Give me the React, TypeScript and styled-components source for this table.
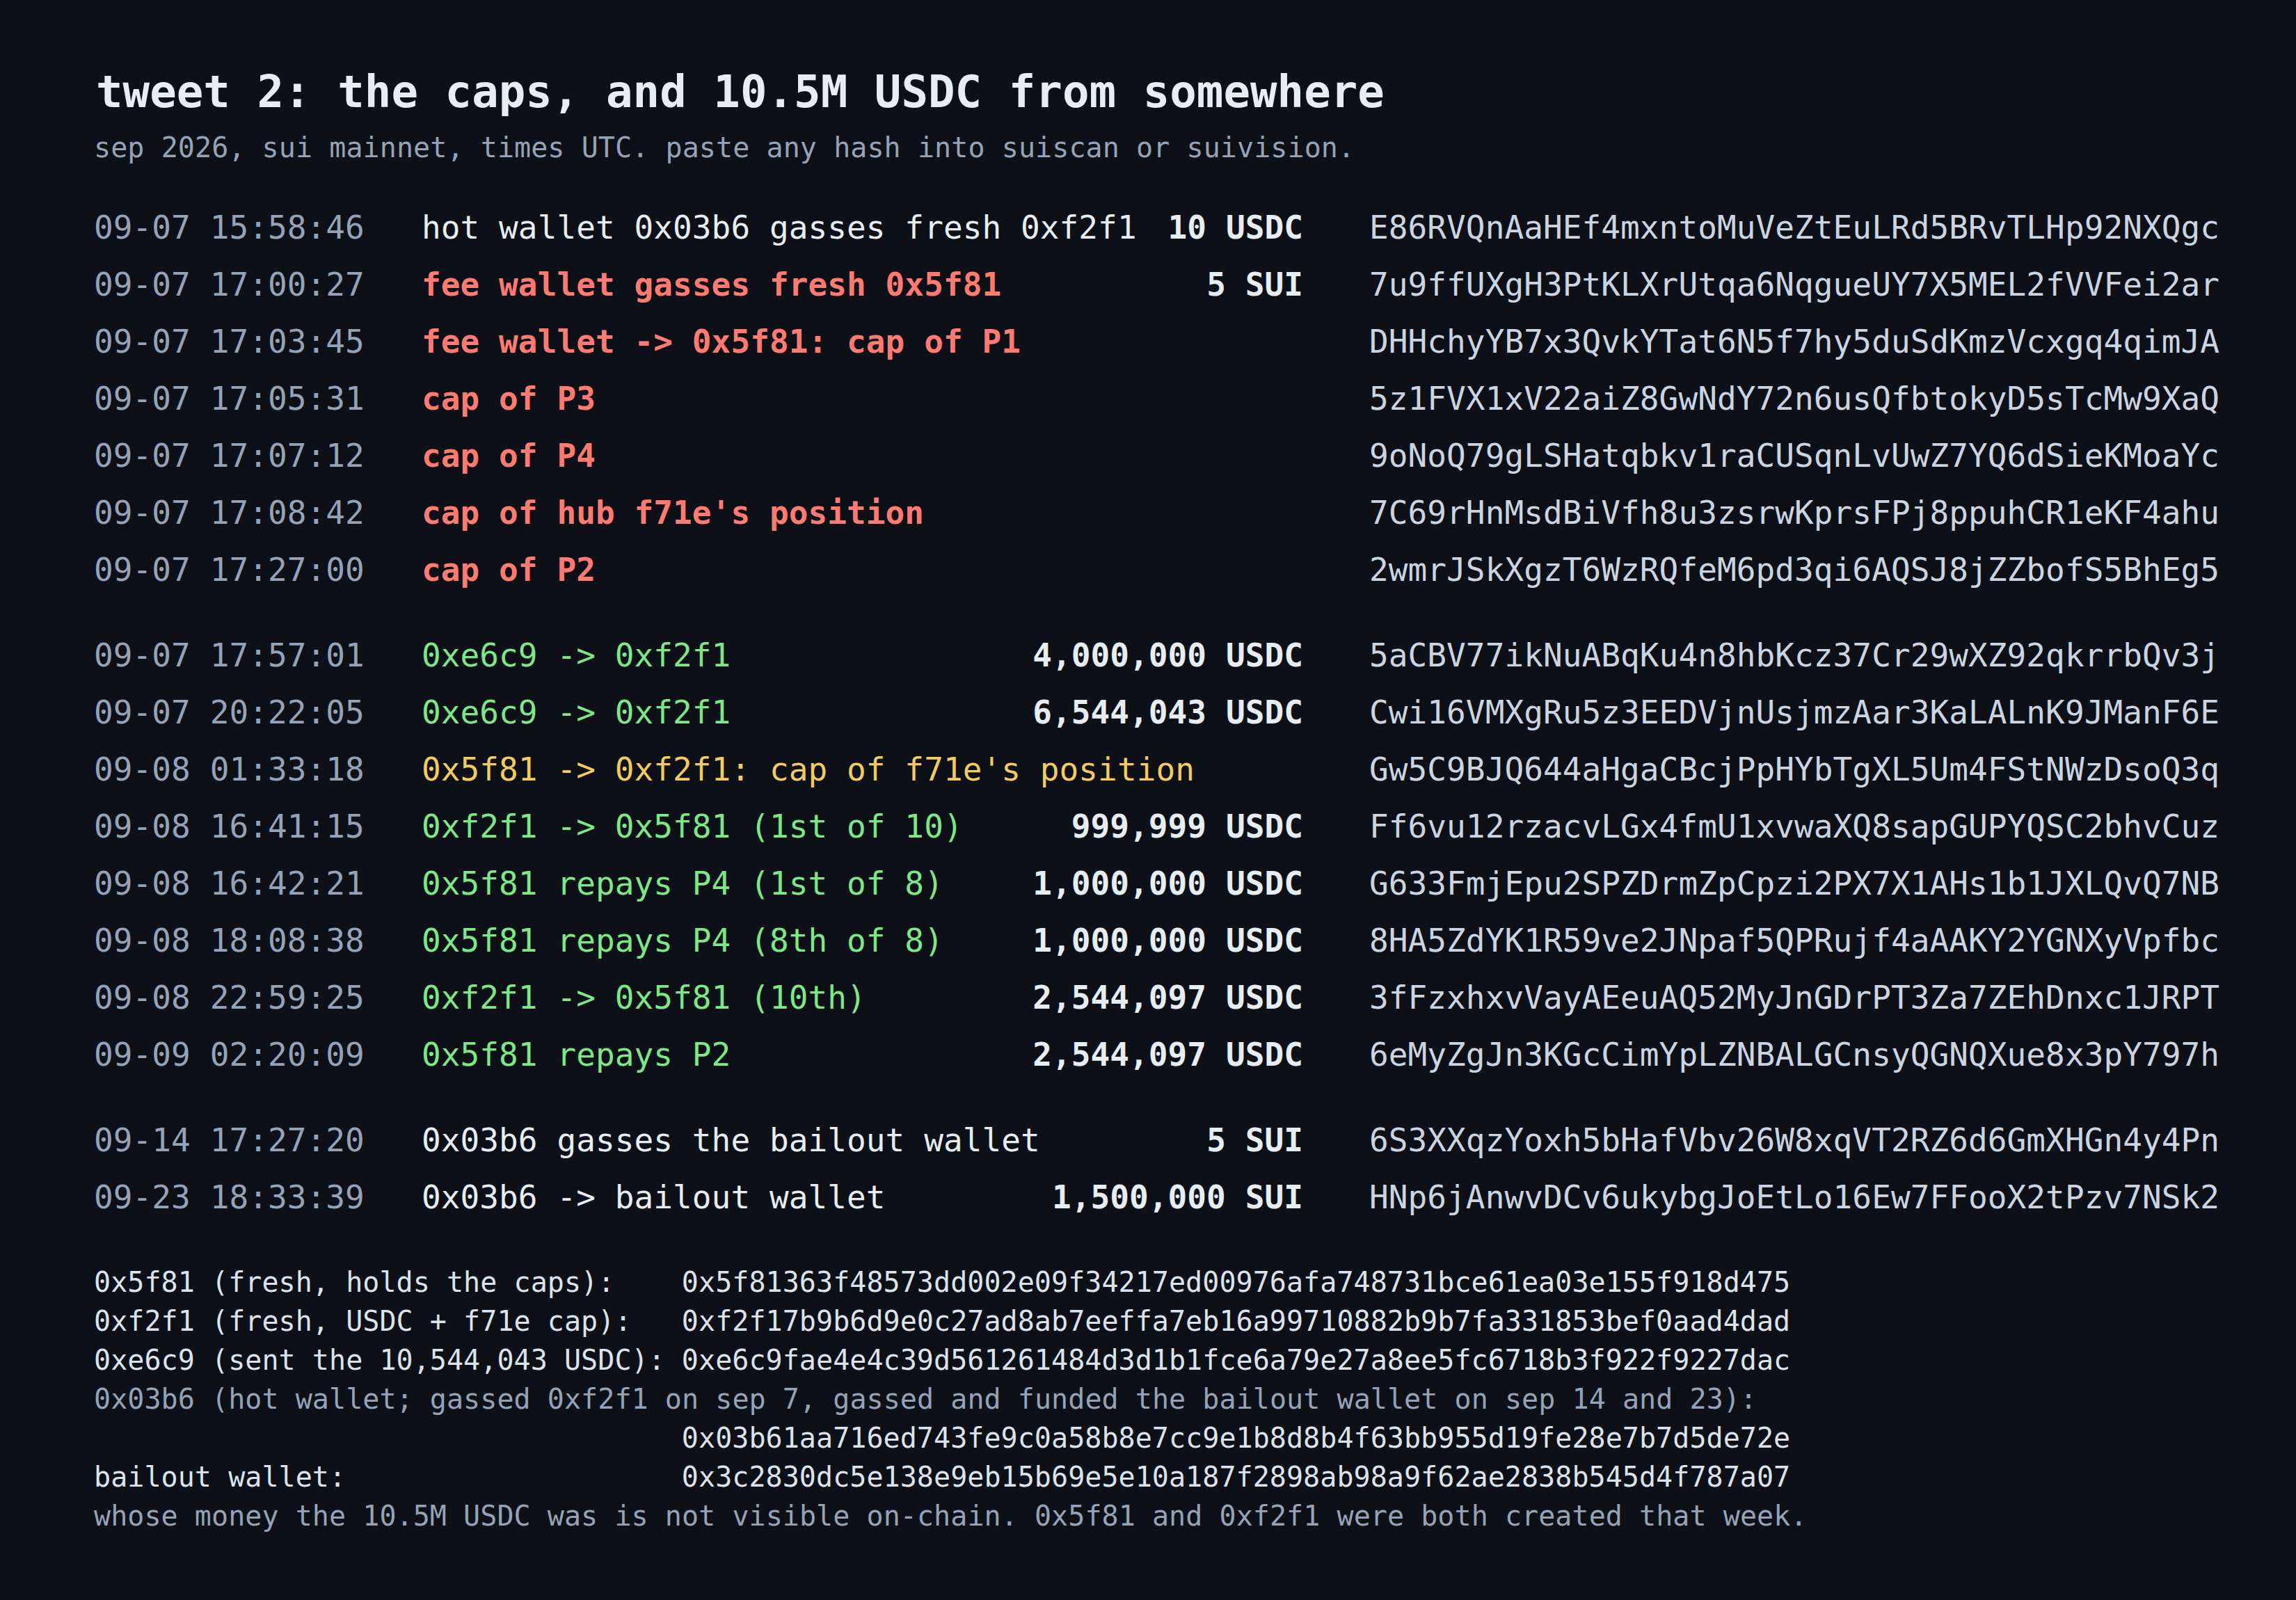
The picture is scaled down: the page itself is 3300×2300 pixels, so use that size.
import React from "react";
import styled, { createGlobalStyle } from "styled-components";

const GlobalStyle = createGlobalStyle`
  html, body {
    margin: 0;
    padding: 0;
    background: #0d1117;
  }
  body {
    font-family: "DejaVu Sans Mono", "Liberation Mono", monospace;
    color: #e6edf3;
  }
`;

type Tone = "plain" | "red" | "green" | "yellow";

interface Tx {
  time: string;
  desc: string;
  amount?: string;
  hash: string;
  tone: Tone;
}

const groups: Tx[][] = [
  [
    { time: "09-07 15:58:46", desc: "hot wallet 0x03b6 gasses fresh 0xf2f1", amount: "10 USDC", hash: "E86RVQnAaHEf4mxntoMuVeZtEuLRd5BRvTLHp92NXQgc", tone: "plain" },
    { time: "09-07 17:00:27", desc: "fee wallet gasses fresh 0x5f81", amount: "5 SUI", hash: "7u9ffUXgH3PtKLXrUtqa6NqgueUY7X5MEL2fVVFei2ar", tone: "red" },
    { time: "09-07 17:03:45", desc: "fee wallet -> 0x5f81: cap of P1", hash: "DHHchyYB7x3QvkYTat6N5f7hy5duSdKmzVcxgq4qimJA", tone: "red" },
    { time: "09-07 17:05:31", desc: "cap of P3", hash: "5z1FVX1xV22aiZ8GwNdY72n6usQfbtokyD5sTcMw9XaQ", tone: "red" },
    { time: "09-07 17:07:12", desc: "cap of P4", hash: "9oNoQ79gLSHatqbkv1raCUSqnLvUwZ7YQ6dSieKMoaYc", tone: "red" },
    { time: "09-07 17:08:42", desc: "cap of hub f71e's position", hash: "7C69rHnMsdBiVfh8u3zsrwKprsFPj8ppuhCR1eKF4ahu", tone: "red" },
    { time: "09-07 17:27:00", desc: "cap of P2", hash: "2wmrJSkXgzT6WzRQfeM6pd3qi6AQSJ8jZZbofS5BhEg5", tone: "red" },
  ],
  [
    { time: "09-07 17:57:01", desc: "0xe6c9 -> 0xf2f1", amount: "4,000,000 USDC", hash: "5aCBV77ikNuABqKu4n8hbKcz37Cr29wXZ92qkrrbQv3j", tone: "green" },
    { time: "09-07 20:22:05", desc: "0xe6c9 -> 0xf2f1", amount: "6,544,043 USDC", hash: "Cwi16VMXgRu5z3EEDVjnUsjmzAar3KaLALnK9JManF6E", tone: "green" },
    { time: "09-08 01:33:18", desc: "0x5f81 -> 0xf2f1: cap of f71e's position", hash: "Gw5C9BJQ644aHgaCBcjPpHYbTgXL5Um4FStNWzDsoQ3q", tone: "yellow" },
    { time: "09-08 16:41:15", desc: "0xf2f1 -> 0x5f81 (1st of 10)", amount: "999,999 USDC", hash: "Ff6vu12rzacvLGx4fmU1xvwaXQ8sapGUPYQSC2bhvCuz", tone: "green" },
    { time: "09-08 16:42:21", desc: "0x5f81 repays P4 (1st of 8)", amount: "1,000,000 USDC", hash: "G633FmjEpu2SPZDrmZpCpzi2PX7X1AHs1b1JXLQvQ7NB", tone: "green" },
    { time: "09-08 18:08:38", desc: "0x5f81 repays P4 (8th of 8)", amount: "1,000,000 USDC", hash: "8HA5ZdYK1R59ve2JNpaf5QPRujf4aAAKY2YGNXyVpfbc", tone: "green" },
    { time: "09-08 22:59:25", desc: "0xf2f1 -> 0x5f81 (10th)", amount: "2,544,097 USDC", hash: "3fFzxhxvVayAEeuAQ52MyJnGDrPT3Za7ZEhDnxc1JRPT", tone: "green" },
    { time: "09-09 02:20:09", desc: "0x5f81 repays P2", amount: "2,544,097 USDC", hash: "6eMyZgJn3KGcCimYpLZNBALGCnsyQGNQXue8x3pY797h", tone: "green" },
  ],
  [
    { time: "09-14 17:27:20", desc: "0x03b6 gasses the bailout wallet", amount: "5 SUI", hash: "6S3XXqzYoxh5bHafVbv26W8xqVT2RZ6d6GmXHGn4y4Pn", tone: "plain" },
    { time: "09-23 18:33:39", desc: "0x03b6 -> bailout wallet", amount: "1,500,000 SUI", hash: "HNp6jAnwvDCv6ukybgJoEtLo16Ew7FFooX2tPzv7NSk2", tone: "plain" },
  ],
];

interface AddrLine {
  label: string;
  value?: string;
  muted?: boolean;
}

const addresses: AddrLine[] = [
  { label: "0x5f81 (fresh, holds the caps):", value: "0x5f81363f48573dd002e09f34217ed00976afa748731bce61ea03e155f918d475" },
  { label: "0xf2f1 (fresh, USDC + f71e cap):", value: "0xf2f17b9b6d9e0c27ad8ab7eeffa7eb16a99710882b9b7fa331853bef0aad4dad" },
  { label: "0xe6c9 (sent the 10,544,043 USDC):", value: "0xe6c9fae4e4c39d561261484d3d1b1fce6a79e27a8ee5fc6718b3f922f9227dac" },
  { label: "0x03b6 (hot wallet; gassed 0xf2f1 on sep 7, gassed and funded the bailout wallet on sep 14 and 23):", muted: true },
  { label: "", value: "0x03b61aa716ed743fe9c0a58b8e7cc9e1b8d8b4f63bb955d19fe28e7b7d5de72e" },
  { label: "bailout wallet:", value: "0x3c2830dc5e138e9eb15b69e5e10a187f2898ab98a9f62ae2838b545d4f787a07" },
  { label: "whose money the 10.5M USDC was is not visible on-chain. 0x5f81 and 0xf2f1 were both created that week.", muted: true },
];

const toneColor: Record<Tone, string> = {
  plain: "#e6edf3",
  red: "#ff7b72",
  green: "#7ee787",
  yellow: "#f2cc60",
};

const Page = styled.main`
  min-height: 100vh;
  box-sizing: border-box;
  padding: 94px 0 0 135px;
  background: #0d1117;
`;

const Title = styled.h1`
  margin: 0;
  padding-left: 3px;
  font-size: 64px;
  line-height: 76.8px;
  font-weight: 700;
  color: #e6edf3;
  white-space: pre;
  letter-spacing: 0.05px;
`;

const Subtitle = styled.p`
  margin: 13px 0 0;
  font-size: 40px;
  line-height: 56px;
  color: #94a3b8;
  white-space: pre;
  letter-spacing: 0.08px;
`;

const Ledger = styled.section`
  margin-top: 46px;
  display: flex;
  flex-direction: column;
  gap: 41px;
`;

const Group = styled.div`
  display: flex;
  flex-direction: column;
`;

const Row = styled.div`
  display: grid;
  grid-template-columns: 471px 1267px auto;
  font-size: 46px;
  line-height: 82px;
  white-space: pre;
  letter-spacing: 0.08px;
`;

const Time = styled.span`
  color: #94a3b8;
`;

const Main = styled.div`
  display: flex;
  justify-content: space-between;
  gap: 44px;
`;

const Desc = styled.span<{ $tone: Tone }>`
  color: ${(p) => toneColor[p.$tone]};
  font-weight: ${(p) => (p.$tone === "red" ? 700 : 400)};
`;

const Amount = styled.span`
  color: #e6edf3;
  font-weight: 700;
`;

const Hash = styled.span`
  padding-left: 95px;
  color: #cbd5e1;
`;

const Footer = styled.section`
  margin-top: 53px;
  display: grid;
  grid-template-columns: 35ch auto;
  font-size: 40px;
  line-height: 56px;
  white-space: pre;
  justify-content: start;
  letter-spacing: 0.06px;
`;

const Label = styled.span<{ $muted?: boolean }>`
  color: ${(p) => (p.$muted ? "#94a3b8" : "#dbe3ec")};
  grid-column: ${(p) => (p.$muted ? "1 / -1" : "1")};
`;

const Value = styled.span`
  color: #dbe3ec;
  grid-column: 2;
  padding-left: 2px;
`;

export default function App() {
  return (
    <>
      <GlobalStyle />
      <Page>
        <Title>tweet 2: the caps, and 10.5M USDC from somewhere</Title>
        <Subtitle>sep 2026, sui mainnet, times UTC. paste any hash into suiscan or suivision.</Subtitle>
        <Ledger>
          {groups.map((g, gi) => (
            <Group key={gi}>
              {g.map((tx) => (
                <Row key={tx.hash}>
                  <Time>{tx.time}</Time>
                  <Main>
                    <Desc $tone={tx.tone}>{tx.desc}</Desc>
                    {tx.amount && <Amount>{tx.amount}</Amount>}
                  </Main>
                  <Hash>{tx.hash}</Hash>
                </Row>
              ))}
            </Group>
          ))}
        </Ledger>
        <Footer>
          {addresses.map((a, i) =>
            a.muted ? (
              <Label key={i} $muted>
                {a.label}
              </Label>
            ) : (
              <React.Fragment key={i}>
                <Label>{a.label}</Label>
                <Value>{a.value}</Value>
              </React.Fragment>
            )
          )}
        </Footer>
      </Page>
    </>
  );
}
